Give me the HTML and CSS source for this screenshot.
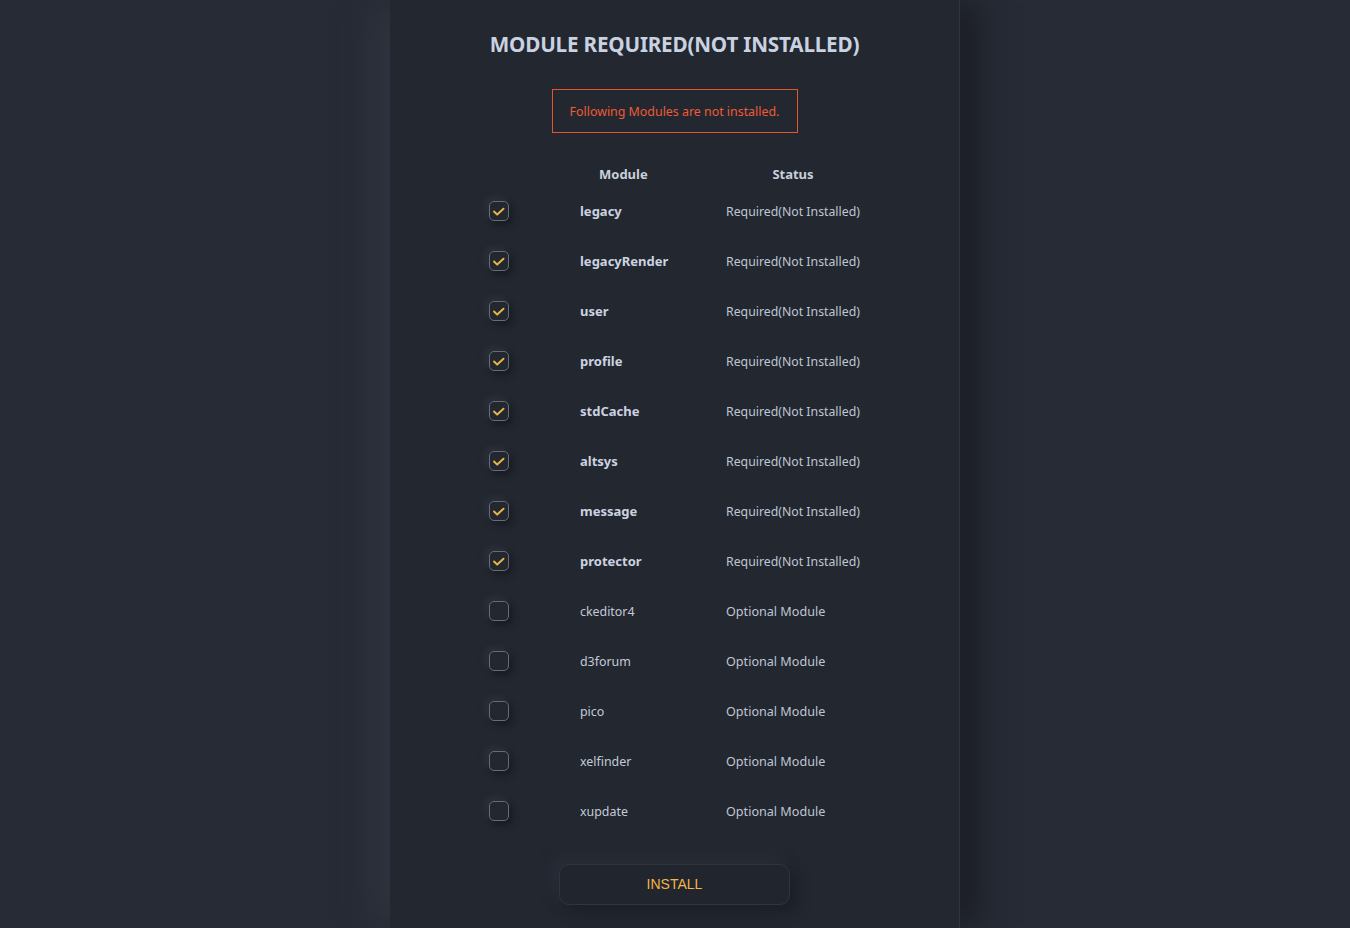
FILE: index.html
```html
<!DOCTYPE html>
<html>
<head>
<meta charset="utf-8">
<link rel="stylesheet" href="styles.css">
</head>
<body>
<div class="page">
  <main class="panel">
    <h1 class="title">MODULE REQUIRED(NOT INSTALLED)</h1>
    <div class="alert">Following Modules are not installed.</div>
    <div class="table">
      <div class="row head">
        <span></span>
        <span class="h-module">Module</span>
        <span class="h-status">Status</span>
      </div>
      <div class="row req"><span class="cb on"><svg viewBox="0 0 20 20"><path d="M4.5 10.5 L8 14 L15 7.5"/></svg></span><span class="name">legacy</span><span class="status">Required(Not Installed)</span></div>
      <div class="row req"><span class="cb on"><svg viewBox="0 0 20 20"><path d="M4.5 10.5 L8 14 L15 7.5"/></svg></span><span class="name">legacyRender</span><span class="status">Required(Not Installed)</span></div>
      <div class="row req"><span class="cb on"><svg viewBox="0 0 20 20"><path d="M4.5 10.5 L8 14 L15 7.5"/></svg></span><span class="name">user</span><span class="status">Required(Not Installed)</span></div>
      <div class="row req"><span class="cb on"><svg viewBox="0 0 20 20"><path d="M4.5 10.5 L8 14 L15 7.5"/></svg></span><span class="name">profile</span><span class="status">Required(Not Installed)</span></div>
      <div class="row req"><span class="cb on"><svg viewBox="0 0 20 20"><path d="M4.5 10.5 L8 14 L15 7.5"/></svg></span><span class="name">stdCache</span><span class="status">Required(Not Installed)</span></div>
      <div class="row req"><span class="cb on"><svg viewBox="0 0 20 20"><path d="M4.5 10.5 L8 14 L15 7.5"/></svg></span><span class="name">altsys</span><span class="status">Required(Not Installed)</span></div>
      <div class="row req"><span class="cb on"><svg viewBox="0 0 20 20"><path d="M4.5 10.5 L8 14 L15 7.5"/></svg></span><span class="name">message</span><span class="status">Required(Not Installed)</span></div>
      <div class="row req"><span class="cb on"><svg viewBox="0 0 20 20"><path d="M4.5 10.5 L8 14 L15 7.5"/></svg></span><span class="name">protector</span><span class="status">Required(Not Installed)</span></div>
      <div class="row opt"><span class="cb"></span><span class="name">ckeditor4</span><span class="status">Optional Module</span></div>
      <div class="row opt"><span class="cb"></span><span class="name">d3forum</span><span class="status">Optional Module</span></div>
      <div class="row opt"><span class="cb"></span><span class="name">pico</span><span class="status">Optional Module</span></div>
      <div class="row opt"><span class="cb"></span><span class="name">xelfinder</span><span class="status">Optional Module</span></div>
      <div class="row opt"><span class="cb"></span><span class="name">xupdate</span><span class="status">Optional Module</span></div>
    </div>
    <button class="install">INSTALL</button>
  </main>
</div>
</body>
</html>
```

FILE: styles.css
```css
html, body {
  margin: 0;
  padding: 0;
  height: 100%;
}
body {
  background: #272b35;
  font-family: "Noto Sans", "Open Sans", sans-serif;
  overflow: hidden;
}
.page {
  display: flex;
  justify-content: center;
  height: 100%;
}
.panel {
  width: 569px;
  min-height: 100%;
  background: #232730;
  border-right: 1px solid #30353f;
  box-shadow: -22px 0 30px -6px #2f343f, 24px 0 30px -4px #1c1f26;
  display: flex;
  flex-direction: column;
  align-items: center;
}
.title {
  margin: 30px 0 0;
  font-size: 20.7px;
  line-height: 28px;
  font-weight: 700;
  color: #c9d2e0;
  letter-spacing: -0.2px;
}
.alert {
  margin-top: 31px;
  width: 244px;
  height: 41px;
  border: 1px solid #e3552f;
  color: #f05a36;
  font-size: 12.4px;
  display: flex;
  align-items: center;
  justify-content: center;
  padding-top: 1px;
  box-sizing: content-box;
}
.table {
  margin-top: 28px;
  width: 371px;
  display: flex;
  flex-direction: column;
  white-space: nowrap;
}
.row {
  display: grid;
  grid-template-columns: 91px 146px 134px;
  align-items: center;
  height: 50px;
}
.row.head {
  height: 26px;
  margin-bottom: -1px;
}
.h-module {
  padding-left: 19px;
  font-weight: 700;
  font-size: 13px;
  color: #c8d0dc;
}
.h-status {
  text-align: center;
  font-weight: 700;
  font-size: 13px;
  color: #c8d0dc;
}
.cb {
  width: 18px;
  height: 18px;
  border: 1px solid #666c77;
  border-radius: 5px;
  box-shadow: 3px 4px 6px #181b21, -3px -3px 6px #2e333d;
  display: flex;
}
.cb svg {
  width: 18px;
  height: 18px;
  fill: none;
  stroke: #e7b548;
  stroke-width: 2.2;
  stroke-linecap: round;
  stroke-linejoin: round;
}
.name {
  font-size: 12.4px;
  color: #c3cad6;
}
.req .name {
  font-size: 13px;
  font-weight: 700;
  color: #ccd3e0;
}
.status {
  font-size: 12.6px;
  color: #bfc6d3;
}
.req .status {
  font-size: 12.3px;
}
.install {
  margin-top: 28px;
  width: 231px;
  height: 41px;
  border: 1px solid #2f343e;
  border-radius: 10px;
  background: #21252d;
  color: #f2b548;
  font-family: "Liberation Sans", Arial, sans-serif;
  font-size: 14px;
  padding: 0 0 1px;
  box-shadow: 6px 6px 14px #1b1e24, -6px -6px 14px #2a2f39;
  cursor: pointer;
}
```
